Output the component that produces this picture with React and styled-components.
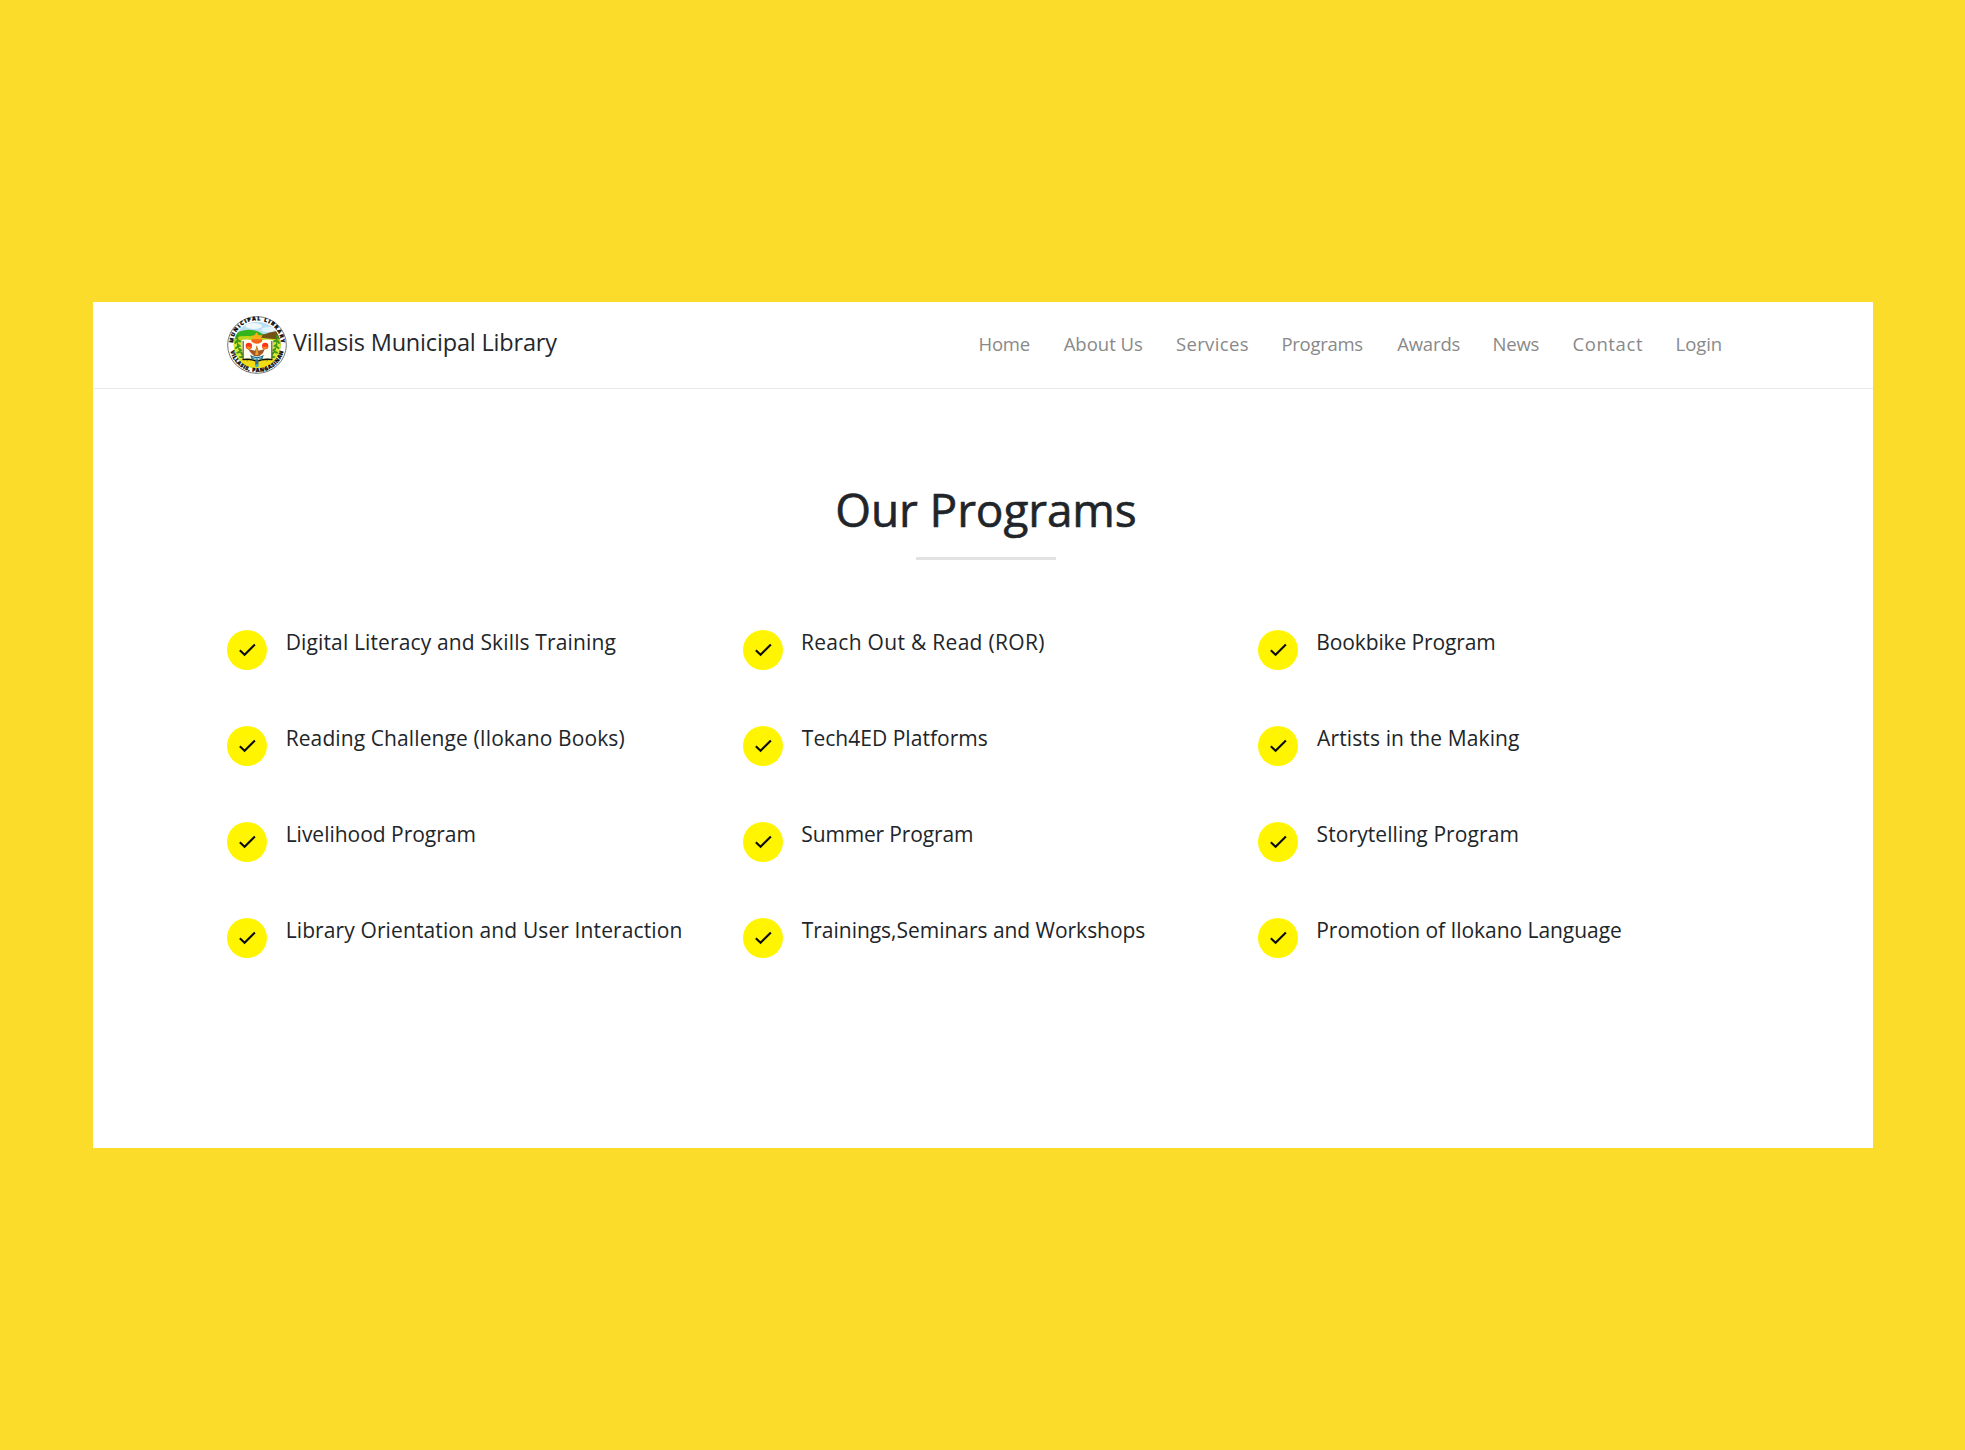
import React from "react";
import styled, { createGlobalStyle } from "styled-components";

const GlobalStyle = createGlobalStyle`
  * { box-sizing: border-box; }
  html, body { margin: 0; padding: 0; }
  body {
    background: #fbdc2b;
    font-family: "Open Sans", "Noto Sans", sans-serif;
    color: #212529;
  }
`;

const Page = styled.div`
  width: 1965px;
  height: 1450px;
  padding: 302px 92px 302px 93px;
  background: #fbdc2b;
  overflow: hidden;
`;

const Panel = styled.main`
  height: 846px;
  background: #fff;
`;

const Navbar = styled.header`
  display: flex;
  align-items: center;
  justify-content: space-between;
  height: 87px;
  padding: 0 122.6px 0 134px;
  border-bottom: 1px solid #e9e9e9;
`;

const Brand = styled.a`
  display: flex;
  align-items: center;
  gap: 6px;
`;

const BrandName = styled.span`
  padding-bottom: 6px;
  font-size: 23.5px;
  line-height: 24px;
  letter-spacing: -0.18px;
  white-space: nowrap;
  color: #25272a;
`;

const Menu = styled.nav`
  display: flex;
  padding-bottom: 2px;
`;

const MenuLink = styled.a`
  width: ${(p) => p.$width}px;
  font-size: 18.5px;
  line-height: 24px;
  letter-spacing: ${(p) => p.$tracking}px;
  white-space: nowrap;
  color: #898989;
`;

const Programs = styled.section`
  width: 1652px;
  padding: 90px 0 0 134px;
`;

const Title = styled.h1`
  margin: 0;
  font-size: 46px;
  font-weight: 400;
  line-height: 60px;
  letter-spacing: -0.12px;
  text-align: center;
  -webkit-text-stroke: 0.6px #212529;
`;

const Divider = styled.hr`
  width: 140px;
  height: 3px;
  margin: 18px auto 0;
  border: 0;
  background: #e3e3e3;
`;

const List = styled.ul`
  display: grid;
  grid-template-columns: repeat(3, 515.3px);
  grid-auto-rows: 96px;
  margin: 69px 0 0;
  padding: 0;
  list-style: none;
`;

const Item = styled.li`
  display: flex;
  align-items: flex-start;
  gap: 17.7px;
`;

const Badge = styled.span`
  display: flex;
  align-items: center;
  justify-content: center;
  flex: none;
  width: 40px;
  height: 40px;
  margin: 0.6px 0 0 0.3px;
  border-radius: 50%;
  background: #fff500;
`;

const Label = styled.span`
  margin-left: ${(p) => p.$indent || 0}px;
  font-size: 21px;
  line-height: 26px;
  letter-spacing: ${(p) => p.$tracking}px;
  white-space: nowrap;
`;

const links = [
  ["Home", 85.2, -0.2],
  ["About Us", 112.3, 0],
  ["Services", 105.6, 0.35],
  ["Programs", 115.6, -0.31],
  ["Awards", 95.4, -0.15],
  ["News", 79.9, -0.2],
  ["Contact", 103.2, 0.6],
  ["Login", 74.8, -0.1],
];

const programs = [
  { name: "Digital Literacy and Skills Training", tracking: 0.14, indent: 0.7 },
  { name: "Reach Out & Read (ROR)", tracking: 0.3, indent: 0.7 },
  { name: "Bookbike Program", tracking: -0.12, indent: 0.7 },
  { name: "Reading Challenge (Ilokano Books)", tracking: 0.1, indent: 0.7 },
  { name: "Tech4ED Platforms", tracking: 0.03, indent: 1.5 },
  { name: "Artists in the Making", tracking: 0.12, indent: 1.5 },
  { name: "Livelihood Program", tracking: -0.02, indent: 0.7 },
  { name: "Summer Program", tracking: -0.15, indent: 1 },
  { name: "Storytelling Program", tracking: 0.09, indent: 1 },
  { name: "Library Orientation and User Interaction", tracking: 0.11, indent: 0.7 },
  { name: "Trainings,Seminars and Workshops", tracking: -0.03, indent: 1.5 },
  { name: "Promotion of Ilokano Language", tracking: -0.05, indent: 0.7 },
];

function Check() {
  return (
    <svg width="18" height="14" viewBox="0 0 18 14" fill="none">
      <path d="M1.8 7.2 L6.6 11.7 L16.9 1.4" stroke="#0c0c0c" strokeWidth="2.1" />
    </svg>
  );
}

const leaves = [
  [51, 86, -60], [57, 96, 20], [49, 100, -50], [57, 110, 30], [51, 116, -35],
  [61, 123, 40], [56, 131, -15], [67, 135, 50], [64, 145, 0], [76, 146, 65],
];

function Laurel() {
  return (
    <g>
      <path d="M55 78 C49 105 56 137 84 157" fill="none" stroke="#2d7f13" strokeWidth="2.5" />
      {leaves.map(([x, y, r]) => (
        <ellipse key={`${x}-${y}`} cx={x} cy={y} rx="7" ry="3.2" transform={`rotate(${r} ${x} ${y})`} fill="#3c9a18" />
      ))}
    </g>
  );
}

const SealDrawing = styled.svg`
  display: block;
  width: 60px;
  height: 58px;
  margin-bottom: 1px;
  overflow: visible;
`;

const SealText = styled.text`
  font-family: "Open Sans", sans-serif;
  font-size: 15.5px;
  font-weight: 800;
  fill: #090909;
  stroke: #090909;
  stroke-width: 1px;
`;

function Seal() {
  return (
    <SealDrawing viewBox="21.5 22 180 174">
      <defs>
        <clipPath id="scene"><ellipse cx="112" cy="109" rx="70" ry="70" /></clipPath>
        <path id="arcTop" d="M40 105 A72 70 0 0 1 184 105" />
        <path id="arcBottom" d="M31 113 A80.500 77 0 0 0 192 113" />
      </defs>
      <ellipse cx="111.500" cy="109" rx="88" ry="85" fill="#fff" stroke="#777" strokeWidth="3" />
      <g clipPath="url(#scene)">
        <rect x="38" y="36" width="150" height="150" fill="#b9def2" />
        <ellipse cx="102" cy="52" rx="25" ry="9" fill="#eef8fd" />
        <ellipse cx="147" cy="63" rx="22" ry="8" fill="#e4f4fb" />
        <path d="M38 82 C60 61 96 56 127 75 L190 88 V190 H38 Z" fill="#35b51c" />
        <path d="M124 80 Q151 69 173 66 L190 105 H112 Z" fill="#755316" />
        <path d="M38 87 Q83 78 116 86 Q154 94 188 90 V190 H38 Z" fill="#c1d51c" />
        <path d="M38 104 H188 V190 H38 Z" fill="#dbe934" />
        <path d="M62 151 Q112 142 164 151 L154 176 H72 Z" fill="#f4dc16" />
      </g>
      <Laurel />
      <g transform="matrix(-1 0 0 1 224 0)"><Laurel /></g>
      <path d="M66 94 L70 151 Q94 147 111 155 Q132 147 156 151 L159 94 Q133 90 111 98 Q88 90 66 94 Z" fill="#fffef2" />
      <path d="M70 97 V151 M156 97 V151" stroke="#403b26" strokeWidth="3" />
      <path d="M68 153 Q94 149 111 158 Q132 149 158 153" fill="none" stroke="#111" strokeWidth="4" />
      <path d="M94 100 L100 88 L92 82 L104 80 L110 71 L116 80 L128 80 L122 90 L128 100 Z" fill="#ffae19" />
      <path d="M94 92 H128 A17 13 0 0 1 94 92 Z" fill="#f2641c" />
      <circle cx="87" cy="112" r="9.500" fill="#f8351d" />
      <circle cx="136" cy="112" r="9.500" fill="#f8351d" />
      <path d="M78 114 H96 L87 122 Z M127 114 H145 L136 122 Z" fill="#ff8e13" />
      <path d="M111 110 L116 126 L135 121 L129 134 L119 142 H103 L94 134 L84 121 L106 126 Z" fill="#a65721" />
      <path d="M111 112 L116 139 H106 Z" fill="#e9a137" />
      <path d="M91 138 Q111 151 132 138 L127 153 L115 151 L116 170 H106 L107 151 L96 153 Z" fill="#276f8c" />
      <path d="M98 147 Q111 155 125 147" fill="none" stroke="#8ed6ef" strokeWidth="3" />
      <circle cx="111" cy="171" r="5" fill="#3bb4d3" />
      <SealText><textPath href="#arcTop" startOffset="2" textLength="218">MUNICIPAL LIBRARY</textPath></SealText>
      <SealText><textPath href="#arcBottom" startOffset="14" textLength="218">VILLASIS, PANGASINAN</textPath></SealText>
    </SealDrawing>
  );
}

export default function App() {
  return (
    <Page>
      <GlobalStyle />
      <Panel>
        <Navbar>
          <Brand>
            <Seal />
            <BrandName>Villasis Municipal Library</BrandName>
          </Brand>
          <Menu>
            {links.map(([name, width, tracking]) => (
              <MenuLink key={name} $width={width} $tracking={tracking}>{name}</MenuLink>
            ))}
          </Menu>
        </Navbar>
        <Programs>
          <Title>Our Programs</Title>
          <Divider />
          <List>
            {programs.map(({ name, tracking, indent }) => (
              <Item key={name}>
                <Badge><Check /></Badge>
                <Label $tracking={tracking} $indent={indent}>{name}</Label>
              </Item>
            ))}
          </List>
        </Programs>
      </Panel>
    </Page>
  );
}
